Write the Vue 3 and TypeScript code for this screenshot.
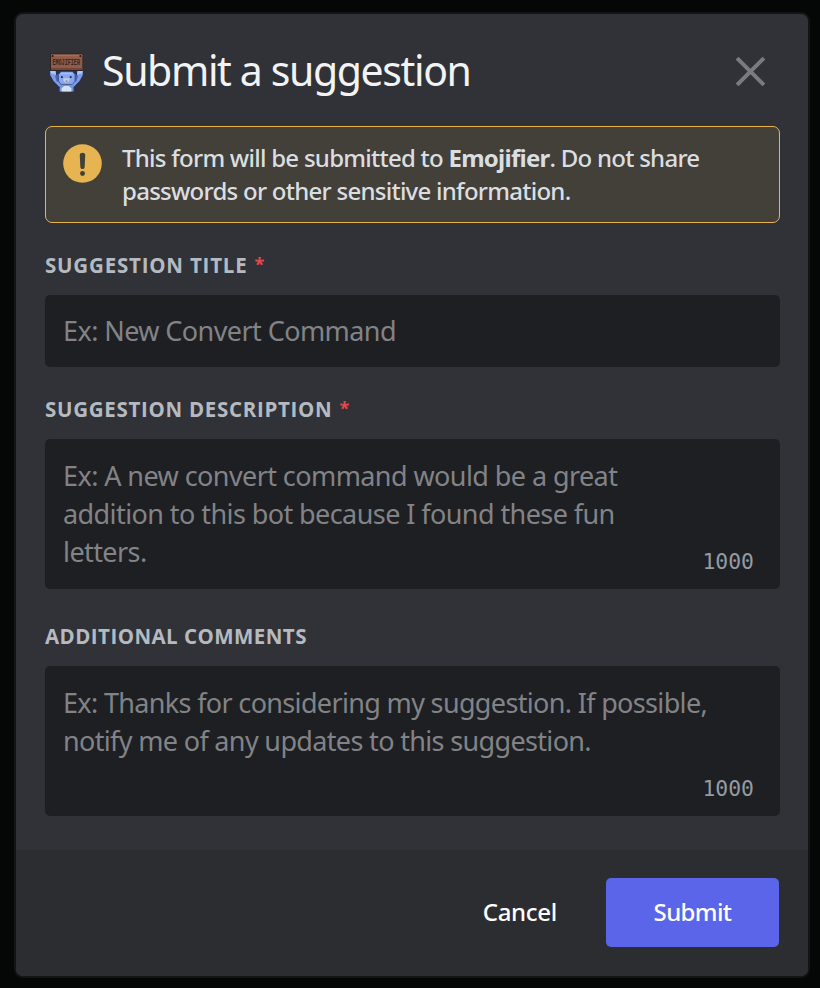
<script setup lang="ts">
import { ref } from 'vue'

interface Field {
  id: string
  label: string
  required: boolean
  multiline: boolean
  placeholder: string
  max: number
}

const fields: Field[] = [
  {
    id: 'title',
    label: 'SUGGESTION TITLE',
    required: true,
    multiline: false,
    placeholder: 'Ex: New Convert Command',
    max: 100,
  },
  {
    id: 'description',
    label: 'SUGGESTION DESCRIPTION',
    required: true,
    multiline: true,
    placeholder:
      'Ex: A new convert command would be a great\naddition to this bot because I found these fun\nletters.',
    max: 1000,
  },
  {
    id: 'comments',
    label: 'ADDITIONAL COMMENTS',
    required: false,
    multiline: true,
    placeholder:
      'Ex: Thanks for considering my suggestion. If possible,\nnotify me of any updates to this suggestion.',
    max: 1000,
  },
]

const values = ref<Record<string, string>>({ title: '', description: '', comments: '' })
</script>

<template>
  <main class="backdrop">
    <form class="modal" @submit.prevent>
      <div class="body">
        <header class="header">
          <svg class="avatar" viewBox="0 0 36 40" aria-hidden="true">
            <path d="M0.5 17H34.5L34.5 22L32 28L26 33V38.5H9V33L3 28L0.5 22Z" fill="#28315a" />
            <path d="M1.2 18H6.5L7.5 25L12 31.5L10.5 34L4.5 28L1.2 22Z" fill="#7c9ce6" />
            <path d="M33.8 18H28.5L27.5 25L23 31.5L24.5 34L30.5 28L33.8 22Z" fill="#7c9ce6" />
            <path d="M1.2 18H6.5L7 21.5L2 20.5ZM33.8 18H28.5L28 21.5L33 20.5Z" fill="#a9c6fa" />
            <path d="M6 23L9 21V29L7.5 28ZM29 23L26 21V29L27.5 28Z" fill="#4b62b0" />
            <rect x="1.2" y=".6" width="33" height="17.2" rx="1.2" fill="#2e201f" />
            <rect x="2" y="1.6" width="31.4" height="15.2" fill="#8f5c49" />
            <path d="M2 1.6H33.4V3.2H2Z" fill="#a46e57" />
            <path d="M2 15H33.4V16.8H2Z" fill="#744536" />
            <circle cx="3.6" cy="3" r="1.1" fill="#231919" />
            <circle cx="31.4" cy="3" r="1.1" fill="#231919" />
            <text x="3.4" y="12.2" textLength="27.6" lengthAdjust="spacingAndGlyphs" class="sign">EMOJIFIER</text>
            <path d="M12 18.8H23.5L26 21.5V28L23.5 31.4H12L9.4 28V21.5Z" fill="#86a8f0" stroke="#354680" stroke-width=".7" />
            <path d="M12 19.4H23.5L24.5 21.2H11Z" fill="#a3bffa" />
            <rect x="12" y="23.2" width="1.8" height="1.8" fill="#202c59" />
            <rect x="20.8" y="23.2" width="1.8" height="1.8" fill="#202c59" />
            <path d="M14.5 25.2H20.5V27.4L19 29.6H16L14.5 27.4Z" fill="#c3ccd6" />
            <path d="M16.8 27.4H18.4V28.8H16.8Z" fill="#68769c" />
            <path d="M11 31.8H24.5V38.4H10.5Z" fill="#7797dc" />
            <path d="M12.6 38.4V35.2L15.2 33H19.8L22.4 35.2V38.4Z" fill="#d3e2f8" />
          </svg>
          <h1 class="heading">Submit a suggestion</h1>
          <button class="close" type="button" aria-label="Close">
            <svg viewBox="0 0 30 30"><path d="M2 2L28 28M28 2L2 28" /></svg>
          </button>
        </header>

        <section class="notice">
          <svg class="notice-icon" viewBox="0 0 40 40" aria-hidden="true">
            <circle cx="20" cy="20" r="19.8" fill="#e6b450" />
            <path d="M17.2 11.5C17.2 8.3 22.8 8.3 22.8 11.5L22.2 23.5C22 26.3 18 26.3 17.8 23.5Z" fill="#424039" />
            <circle cx="20" cy="30.2" r="2.5" fill="#424039" />
          </svg>
          <p class="notice-text">
            This form will be submitted to <strong>Emojifier</strong>. Do not share<br />
            passwords or other sensitive information.
          </p>
        </section>

        <div v-for="field in fields" :key="field.id" class="field" :class="field.id">
          <label class="label" :for="field.id">
            {{ field.label }}<span v-if="field.required" class="star">*</span>
          </label>
          <div v-if="field.multiline" class="area">
            <textarea :id="field.id" v-model="values[field.id]" class="control" :placeholder="field.placeholder"></textarea>
            <span class="count">{{ field.max - values[field.id].length }}</span>
          </div>
          <input v-else :id="field.id" v-model="values[field.id]" class="control single" type="text" :placeholder="field.placeholder" />
        </div>
      </div>

      <footer class="footer">
        <button class="cancel" type="button">Cancel</button>
        <button class="submit" type="submit">Submit</button>
      </footer>
    </form>
  </main>
</template>

<style>
body {
  margin: 0;
  background: #050706;
}
</style>

<style scoped>
.backdrop {
  box-sizing: border-box;
  height: 988px;
  padding: 14px 12px 12px 16px;
  background: #050706;
  font-family: 'Noto Sans', 'Open Sans', sans-serif;
}
.modal {
  display: flex;
  flex-direction: column;
  width: 792px;
  height: 962px;
  border-radius: 7px;
  overflow: hidden;
  background: #313237;
  box-shadow: 0 0 0 2px #121415;
}
.body {
  box-sizing: border-box;
  height: 836px;
  padding: 0 28px 0 29px;
}
.header {
  display: flex;
  align-items: center;
  height: 112px;
}
.avatar {
  flex: none;
  width: 36px;
  height: 40px;
  margin: 6px 17px 0 4px;
  overflow: visible;
}
.sign {
  font: bold 9.5px 'Liberation Mono', monospace;
  fill: #3c2520;
}
.heading {
  margin: 0;
  font-size: 41px;
  font-weight: 400;
  line-height: 56px;
  letter-spacing: -1.38px;
  white-space: nowrap;
  color: #f2f3f5;
}
.close {
  width: 31px;
  height: 31px;
  margin: 2px 14px 0 auto;
  padding: 0;
  border: 0;
  background: none;
}
.close svg {
  display: block;
  fill: none;
  stroke: #797b80;
  stroke-width: 3.9;
}
.notice {
  box-sizing: border-box;
  display: flex;
  height: 97px;
  padding: 17px;
  border: 1px solid #e9b34a;
  border-radius: 7px;
  background: #424039;
}
.notice-icon {
  flex: none;
  width: 39px;
  height: 39px;
  margin-right: 20px;
}
.notice-text {
  margin: -3px 0 0;
  font-size: 24px;
  font-weight: 500;
  line-height: 33px;
  white-space: nowrap;
  letter-spacing: -0.74px;
  color: #dbdee1;
}
.notice-text strong {
  font-weight: 700;
}
.field {
  display: flex;
  flex-direction: column;
}
.label {
  height: 43px;
  padding-top: 29px;
  font-family: 'Open Sans', 'Noto Sans', sans-serif;
  font-size: 20.5px;
  font-weight: 700;
  line-height: 26px;
  letter-spacing: 0.45px;
  color: #b5bac1;
}
.title .label {
  letter-spacing: 0.79px;
}
.description .label {
  letter-spacing: 0.7px;
}
.star {
  margin-left: 7px;
  font-size: 18px;
  line-height: 1;
  vertical-align: 2px;
  color: #e5484d;
}
.control {
  box-sizing: border-box;
  display: block;
  width: 735px;
  height: 150px;
  margin: 0;
  padding: 18px;
  border: 0;
  border-radius: 5px;
  outline: 0;
  resize: none;
  overflow: hidden;
  background: #1e1f23;
  font: 400 27px/38px 'Noto Sans', 'Open Sans', sans-serif;
  letter-spacing: -0.58px;
  white-space: pre;
  color: #dbdee1;
}
.comments .control {
  letter-spacing: -0.66px;
}
.control::placeholder {
  color: #828387;
  opacity: 1;
}
.single {
  height: 72px;
  padding: 16px 18px 18px;
}
.area {
  position: relative;
}
.count {
  position: absolute;
  right: 26px;
  bottom: 15px;
  font: 21.4px/25px 'DejaVu Sans Mono', 'Liberation Mono', monospace;
  color: #949ba4;
}
.comments {
  margin-top: 5px;
}
.footer {
  box-sizing: border-box;
  display: flex;
  align-items: center;
  justify-content: flex-end;
  gap: 49px;
  height: 126px;
  padding: 0 29px 1px 0;
  background: #2c2d31;
}
.footer button {
  padding: 0 0 2px;
  border: 0;
  font: 500 24px/32px 'Noto Sans', 'Open Sans', sans-serif;
  letter-spacing: -0.3px;
  color: #fff;
}
.cancel {
  background: none;
}
.footer .submit {
  width: 173px;
  height: 69px;
  border-radius: 5px;
  letter-spacing: -0.6px;
  background: #5b65ea;
}
</style>
